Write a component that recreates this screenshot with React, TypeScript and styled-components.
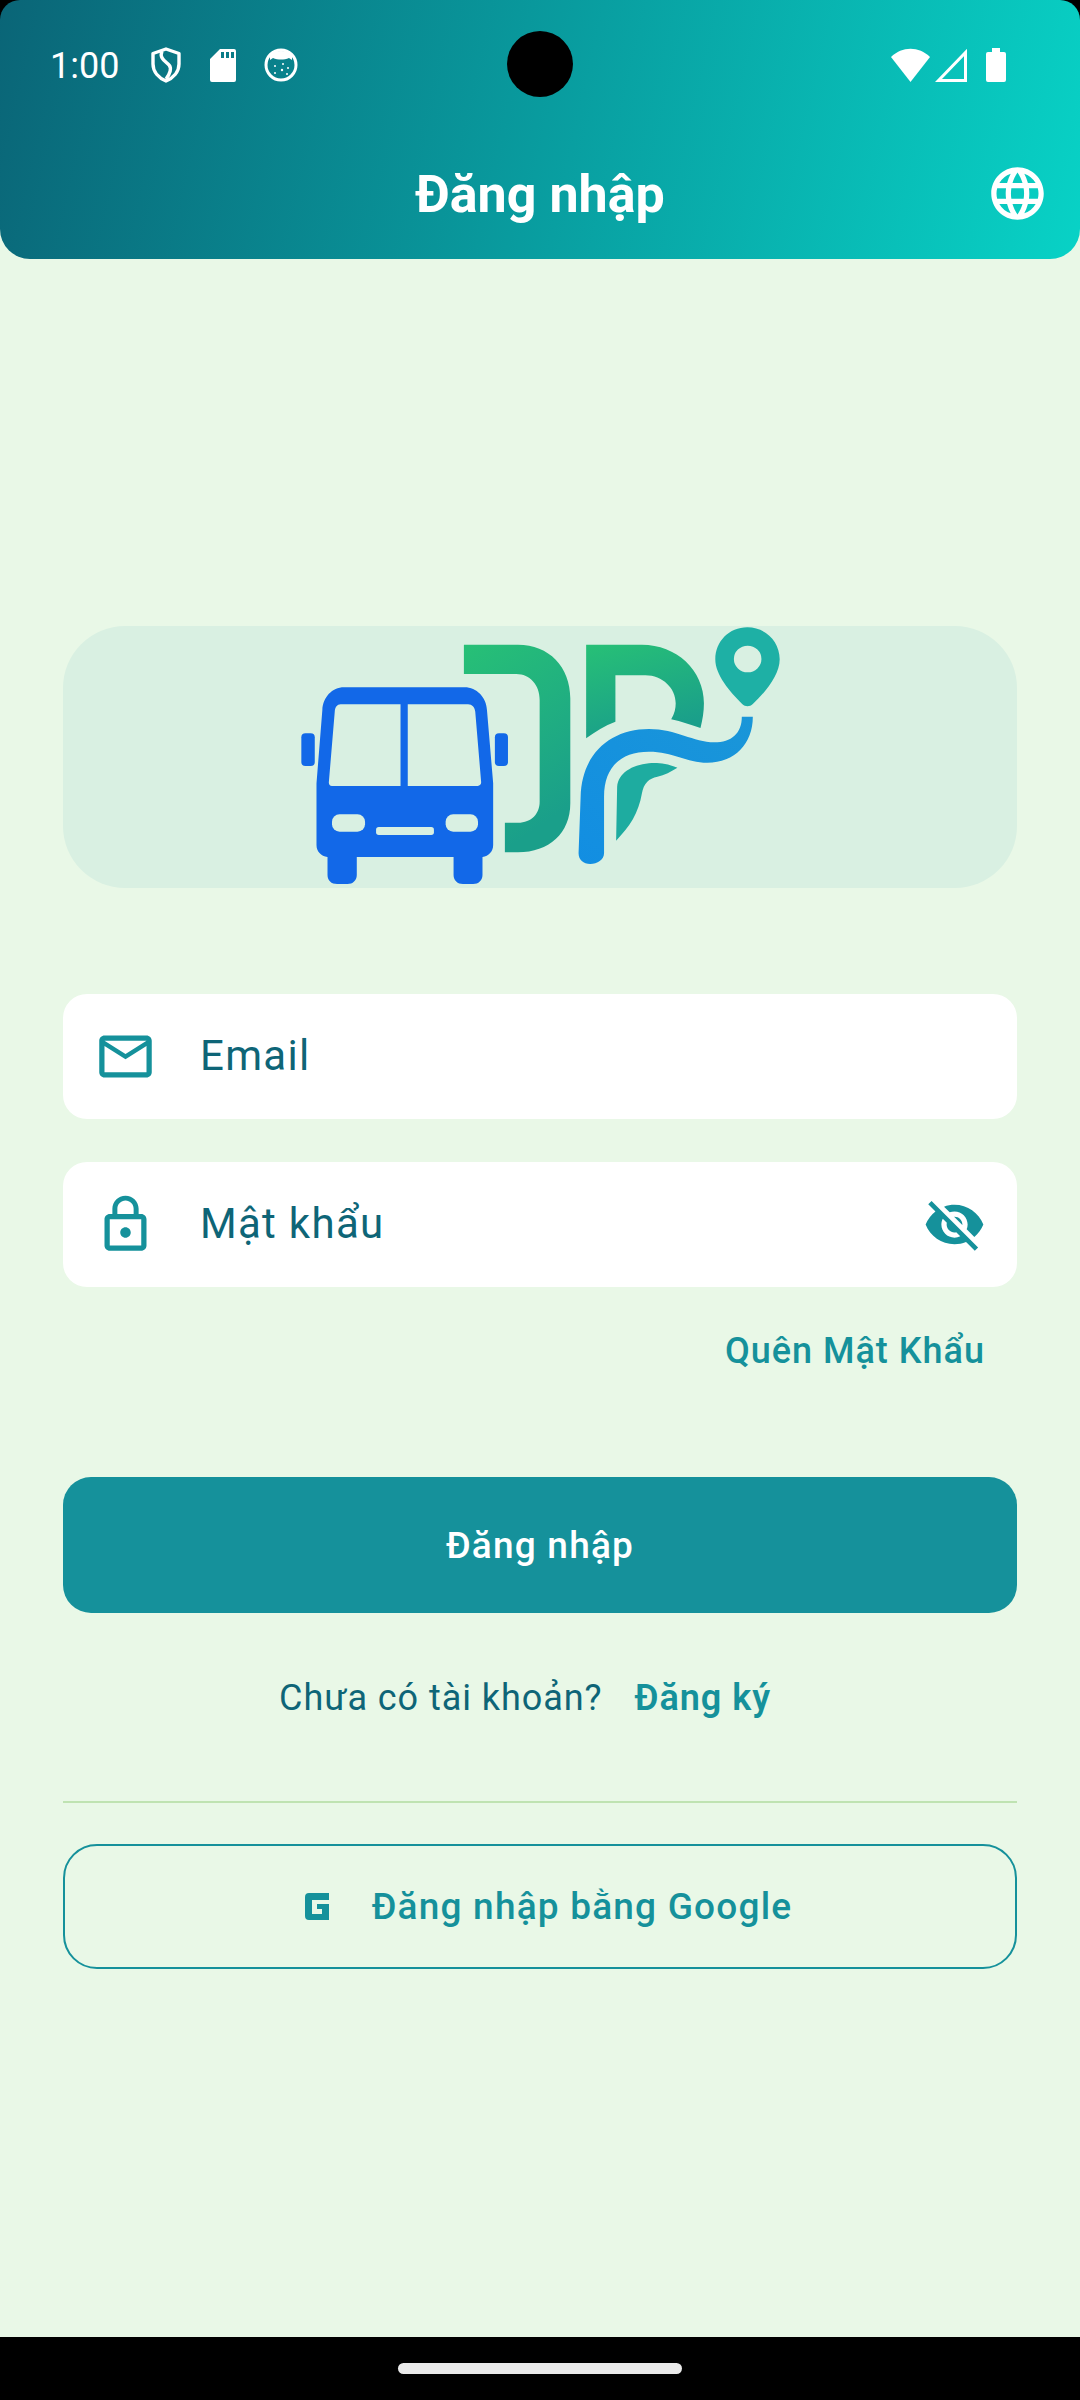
import React from 'react';
import styled, { createGlobalStyle } from 'styled-components';
import { MdLanguage, MdLockOutline, MdOutlineEmail, MdVisibilityOff } from 'react-icons/md';

const GlobalStyle = createGlobalStyle`
  html, body {
    margin: 0;
    padding: 0;
    background: #000;
  }
  * {
    box-sizing: border-box;
  }
`;

const teal = '#15919b';
const darkTeal = '#0e6577';

const Screen = styled.div`
  width: 1080px;
  height: 2400px;
  display: flex;
  flex-direction: column;
  background: linear-gradient(#000 0 30px, #e9f8e7 30px);
  font-family: Roboto, 'Noto Sans', sans-serif;
  overflow: hidden;
`;

const Header = styled.header`
  height: 259px;
  flex: none;
  display: flex;
  flex-direction: column;
  padding: 0 34px 0 50px;
  border-radius: 20px 20px 30px 30px;
  background: linear-gradient(103deg, #0a6577 0%, #08d2c6 100%);
  color: #fff;
`;

const StatusBar = styled.div`
  height: 130px;
  flex: none;
  display: flex;
  align-items: center;
  justify-content: space-between;
  position: relative;
`;

const LeftStatus = styled.div`
  display: flex;
  align-items: center;
  gap: 28px;
`;

const RightStatus = styled.div`
  display: flex;
  align-items: center;
  gap: 5px;
  padding-right: 40px;
`;

const BatterySlot = styled.span`
  display: flex;
  margin-left: 14px;
`;

const Clock = styled.span`
  font-size: 36px;
  margin: 2px 3px 0 0;
`;

const CameraHole = styled.div`
  position: absolute;
  left: 457px;
  top: 31px;
  width: 66px;
  height: 66px;
  border-radius: 50%;
  background: #000;
`;

const TitleRow = styled.div`
  flex: 1;
  display: flex;
  align-items: center;
  justify-content: center;
  position: relative;
`;

const Title = styled.h1`
  margin: 0 0 0 -16px;
  font-size: 52px;
  font-weight: 700;
`;

const LangButton = styled.div`
  position: absolute;
  right: -3px;
  top: 32px;
  display: flex;
`;

const Main = styled.main`
  flex: 1;
  display: flex;
  flex-direction: column;
  padding: 367px 63px 0;
`;

const LogoCard = styled.div`
  height: 262px;
  flex: none;
  display: flex;
  justify-content: center;
  border-radius: 62px;
  background: #d9f0e2;
  margin-bottom: 106px;
`;

const Field = styled.div<{ $gap?: number }>`
  height: 125px;
  flex: none;
  display: flex;
  align-items: center;
  padding: 0 31px 0 31px;
  margin-bottom: ${({ $gap }) => $gap ?? 0}px;
  border-radius: 24px;
  background: #fff;
  color: ${teal};
`;

const FieldLabel = styled.span`
  flex: 1;
  margin-left: 43px;
  margin-top: -2px;
  font-size: 42px;
  letter-spacing: 1.3px;
  color: ${darkTeal};
`;

const ForgotLink = styled.div`
  align-self: flex-end;
  margin: 43px 32px 0 0;
  font-size: 36px;
  font-weight: 500;
  letter-spacing: 1px;
  color: ${teal};
`;

const PrimaryButton = styled.button`
  height: 136px;
  flex: none;
  margin-top: 105px;
  border: none;
  border-radius: 28px;
  background: ${teal};
  color: #fff;
  font-family: inherit;
  font-size: 37px;
  font-weight: 500;
  letter-spacing: 1.2px;
`;

const SignupRow = styled.div`
  display: flex;
  justify-content: center;
  gap: 32px;
  margin-top: 64px;
  padding-right: 30px;
  font-size: 36px;
  letter-spacing: 0.95px;
  color: ${darkTeal};
`;

const SignupLink = styled.span`
  font-weight: 600;
  color: ${teal};
`;

const Divider = styled.hr`
  width: 100%;
  height: 2px;
  margin: 82px 0 0;
  border: none;
  background: #bfe3b2;
`;

const GoogleButton = styled.button`
  height: 125px;
  flex: none;
  margin-top: 41px;
  display: flex;
  align-items: center;
  justify-content: center;
  gap: 43px;
  padding: 0 0 0 17px;
  border: 2px solid ${teal};
  border-radius: 34px;
  background: transparent;
  color: ${teal};
  font-family: inherit;
  font-size: 37px;
  font-weight: 500;
  letter-spacing: 1.2px;
`;

const NavBar = styled.div`
  height: 63px;
  flex: none;
  display: flex;
  justify-content: center;
  padding-top: 26px;
  background: #000;
`;

const NavPill = styled.div`
  width: 284px;
  height: 11px;
  border-radius: 6px;
  background: #eaeaea;
`;

const ShieldIcon = () => (
  <svg width="32" height="36" viewBox="0 0 32 36" fill="none" stroke="#fff" strokeWidth="3.4" strokeLinejoin="round">
    <path d="M16 2 L29 6.5 V17 C29 25 23 31 16 34 C9 31 3 25 3 17 V6.5 Z" />
    <path d="M12 4 C9 11 15 14 19 18 C22 21 20 27 16 32" />
  </svg>
);

const SdIcon = () => (
  <svg width="26" height="33" viewBox="0 0 26 33" fill="#fff">
    <path
      fillRule="evenodd"
      d="M10 0 H24 A2 2 0 0 1 26 2 V31 A2 2 0 0 1 24 33 H2 A2 2 0 0 1 0 31 V10 Z M11 3 V9 H14 V3 Z M16 3 V9 H19 V3 Z M21 3 V9 H24 V3 Z"
    />
  </svg>
);

const FaceIcon = () => (
  <svg width="34" height="34" viewBox="0 0 34 34" fill="none">
    <circle cx="17" cy="17" r="15" stroke="#fff" strokeWidth="3" />
    <path d="M6 6 C10 2 24 2 28 6 L28 12 L25 10 C20 12 14 12 9 10 L6 12 Z" fill="#fff" />
    <g fill="#fff">
      <circle cx="11" cy="18" r="1" />
      <circle cx="19" cy="16" r="1" />
      <circle cx="24" cy="20" r="1" />
      <circle cx="18" cy="22" r="1.2" />
      <circle cx="11" cy="25" r="1" />
      <circle cx="23" cy="26" r="1" />
    </g>
  </svg>
);

const WifiIcon = () => (
  <svg width="39" height="34" viewBox="0 0 39 34" fill="#fff">
    <path d="M0 9 C11 -2 28 -2 39 9 L19.5 34 Z" />
  </svg>
);

const SignalIcon = () => (
  <svg width="32" height="33" viewBox="0 0 32 33" fill="none" stroke="#fff" strokeWidth="3">
    <path d="M30.5 3.5 V31.5 H3.5 Z" />
  </svg>
);

const BatteryIcon = () => (
  <svg width="20" height="34" viewBox="0 0 20 34" fill="#fff">
    <path d="M6 0 H14 V4 H18 A2 2 0 0 1 20 6 V32 A2 2 0 0 1 18 34 H2 A2 2 0 0 1 0 32 V6 A2 2 0 0 1 2 4 H6 Z" />
  </svg>
);

const GoogleIcon = () => (
  <svg width="24" height="27" viewBox="0 0 24 27" fill={teal}>
    <path d="M4 0 H24 V7 H7 V21 H17 V16 H12 V11 H24 V27 H4 A4 4 0 0 1 0 23 V4 A4 4 0 0 1 4 0 Z" />
  </svg>
);

const Logo = () => (
  <svg width="540" height="262" viewBox="0 48 1568 786" preserveAspectRatio="none">
    <defs>
      <linearGradient id="letters" x1="0" y1="0" x2="0.35" y2="1">
        <stop offset="0" stopColor="#27c076" />
        <stop offset="1" stopColor="#1a9f8a" />
      </linearGradient>
      <linearGradient id="road" x1="0" y1="1" x2="1" y2="0">
        <stop offset="0" stopColor="#128ee2" />
        <stop offset="1" stopColor="#1a96d8" />
      </linearGradient>
    </defs>
    <g fill="#1268e8">
      <path
        fillRule="evenodd"
        d="M215 232 H565 C600 232 628 262 630 300 L648 520 V705 C648 725 635 738 617 741 V795 C617 812 605 822 590 822 H560 C545 822 533 812 533 795 V741 H252 V795 C252 812 240 822 225 822 H195 C178 822 167 812 167 795 V741 C148 738 135 725 135 705 V520 L152 300 C154 262 180 232 215 232 Z
        M205 283 H379 V528 H180 C173 528 170 522 171 515 L188 305 C189 292 195 283 205 283 Z
        M400 283 H575 C587 283 594 292 596 305 L613 515 C614 522 610 528 603 528 H400 Z"
      />
      <rect x="91" y="370" width="39" height="98" rx="12" />
      <rect x="653" y="370" width="38" height="98" rx="12" />
    </g>
    <g fill="#d9f0e2">
      <rect x="180" y="613" width="96" height="52" rx="22" />
      <rect x="510" y="613" width="94" height="52" rx="22" />
      <rect x="308" y="651" width="168" height="24" rx="8" />
    </g>
    <path
      fill="url(#letters)"
      d="M563 104 H720 C810 104 872 170 872 265 V580 C872 670 810 727 720 727 H682 V638 H720 C760 638 783 610 783 575 V270 C783 225 755 192 715 192 H563 Z"
    />
    <path
      fill="url(#letters)"
      d="M918 104 H1080 C1180 104 1260 180 1260 280 C1260 305 1256 330 1250 354 C1220 344 1195 335 1165 328 C1175 310 1178 295 1178 280 C1178 235 1140 196 1090 196 H1003 V335 C972 347 945 365 918 385 Z"
    />
    <path
      fill="#1eb0a5"
      fillRule="evenodd"
      d="M1386 52 C1440 52 1480 95 1480 148 C1480 195 1440 245 1402 282 C1393 291 1380 291 1371 282 C1335 245 1293 195 1293 148 C1293 95 1333 52 1386 52 Z M1387 107 A40 40 0 1 0 1387 187 A40 40 0 1 0 1387 107 Z"
    />
    <path
      fill="url(#road)"
      d="M1370 320 H1402 C1402 400 1350 458 1270 458 C1210 458 1170 425 1100 425 C1020 425 970 470 970 560 V730 C970 750 950 762 930 762 C910 762 896 750 896 730 L902 560 C905 430 990 357 1100 357 C1180 357 1230 397 1290 397 C1340 397 1370 370 1370 320 Z"
    />
    <path
      fill="#1eaca0"
      d="M1183 473 C1150 460 1125 458 1100 460 C1050 465 1012 490 1008 530 L1005 692 C1045 650 1070 610 1080 550 C1085 520 1100 505 1125 500 C1145 495 1165 485 1183 473 Z"
    />
  </svg>
);

const App: React.FC = () => {
  return (
    <Screen>
      <GlobalStyle />
      <Header>
        <StatusBar>
          <LeftStatus>
            <Clock>1:00</Clock>
            <ShieldIcon />
            <SdIcon />
            <FaceIcon />
          </LeftStatus>
          <CameraHole />
          <RightStatus>
            <WifiIcon />
            <SignalIcon />
            <BatterySlot>
              <BatteryIcon />
            </BatterySlot>
          </RightStatus>
        </StatusBar>
        <TitleRow>
          <Title>Đăng nhập</Title>
          <LangButton>
            <MdLanguage size={63} />
          </LangButton>
        </TitleRow>
      </Header>
      <Main>
        <LogoCard>
          <Logo />
        </LogoCard>
        <Field $gap={43}>
          <MdOutlineEmail size={63} />
          <FieldLabel>Email</FieldLabel>
        </Field>
        <Field>
          <MdLockOutline size={63} />
          <FieldLabel>Mật khẩu</FieldLabel>
          <MdVisibilityOff size={63} />
        </Field>
        <ForgotLink>Quên Mật Khẩu</ForgotLink>
        <PrimaryButton>Đăng nhập</PrimaryButton>
        <SignupRow>
          <span>Chưa có tài khoản?</span>
          <SignupLink>Đăng ký</SignupLink>
        </SignupRow>
        <Divider />
        <GoogleButton>
          <GoogleIcon />
          Đăng nhập bằng Google
        </GoogleButton>
      </Main>
      <NavBar>
        <NavPill />
      </NavBar>
    </Screen>
  );
};

export default App;
